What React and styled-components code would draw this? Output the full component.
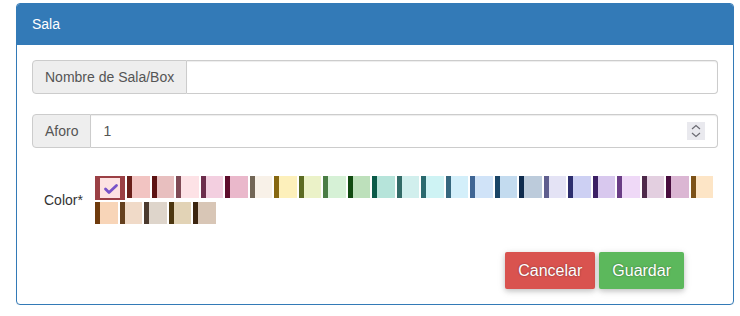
import styled, { createGlobalStyle } from 'styled-components';
import { useState } from 'react';

const GlobalStyle = createGlobalStyle`
  body {
    margin: 0;
    background: #fff;
    font-family: "Liberation Sans", Arial, Helvetica, sans-serif;
    font-size: 14px;
    color: #333;
  }
  * {
    box-sizing: border-box;
  }
`;

// [dark strip, light fill]
const colors = [
  ['#9b4045', '#fde2e2'],
  ['#6a1f1a', '#f2c4c2'],
  ['#5c1212', '#e8bfbf'],
  ['#7f4a55', '#fde2e6'],
  ['#6d2e4d', '#f3cfe0'],
  ['#5e0d2c', '#eab8cb'],
  ['#726656', '#f8f1e8'],
  ['#866710', '#fdf0bb'],
  ['#5b6b22', '#ebf2c8'],
  ['#4a7d45', '#d6f1d6'],
  ['#114a10', '#bde0bb'],
  ['#0a5a48', '#b6e4da'],
  ['#336b67', '#d1efed'],
  ['#2a6a6e', '#cef3f4'],
  ['#36677e', '#d3effa'],
  ['#3f6594', '#d0e3f8'],
  ['#1a4566', '#c3dbef'],
  ['#0f2b4d', '#bccbdb'],
  ['#5f5e8e', '#e4e3f5'],
  ['#2d2e6e', '#cdd0f3'],
  ['#3b1f64', '#d8c8ee'],
  ['#6a3d86', '#efd9f7'],
  ['#4e2a4a', '#e3cfe0'],
  ['#480d3e', '#dbb6d3'],
  ['#7d5218', '#fde5c6'],
  ['#6f3b0d', '#f8d5b8'],
  ['#65401e', '#f0dac8'],
  ['#4b3a2e', '#ded5cb'],
  ['#4d3710', '#e2d3b6'],
  ['#3c2510', '#d8c6b6'],
];

export default function App() {
  const [name, setName] = useState('');
  const [aforo, setAforo] = useState('1');
  const [selected, setSelected] = useState(0);

  return (
    <Page>
      <GlobalStyle />
      <Panel>
        <PanelHeading>Sala</PanelHeading>
        <PanelBody>
          <InputGroup>
            <Addon>Nombre de Sala/Box</Addon>
            <Field>
              <TextInput value={name} onChange={(e) => setName(e.target.value)} />
            </Field>
          </InputGroup>

          <InputGroup $mb='28px'>
            <Addon>Aforo</Addon>
            <Field>
              <TextInput value={aforo} onChange={(e) => setAforo(e.target.value)} />
              <Spinner width='18' height='18' viewBox='0 0 18 18'>
                <rect width='18' height='18' fill='#e9e9ee' />
                <polyline points='5,7 9,3.5 13,7' fill='none' stroke='#6b6b72' strokeWidth='1.2' />
                <polyline points='5,11 9,14.5 13,11' fill='none' stroke='#6b6b72' strokeWidth='1.2' />
              </Spinner>
            </Field>
          </InputGroup>

          <ColorRow>
            <ColorLabel>Color*</ColorLabel>
            <Swatches>
              {colors.map(([dark, light], i) =>
                i === selected ? (
                  <SelectedSwatch key={i} $border={dark} $fill={light} onClick={() => setSelected(i)}>
                    <svg width='20' height='20' viewBox='0 0 20 20'>
                      <polyline
                        points='5.5,11 9,14.5 16.5,7.5'
                        fill='none'
                        stroke='#7852c8'
                        strokeWidth='2.8'
                        strokeLinecap='round'
                        strokeLinejoin='round'
                      />
                    </svg>
                  </SelectedSwatch>
                ) : (
                  <Swatch key={i} $dark={dark} $light={light} onClick={() => setSelected(i)} />
                ),
              )}
            </Swatches>
          </ColorRow>

          <Actions>
            <Button $bg='#d9534f'>Cancelar</Button>
            <Button $bg='#5cb85c'>Guardar</Button>
          </Actions>
        </PanelBody>
      </Panel>
    </Page>
  );
}

const Page = styled.div`
  padding: 3px 6px 0 16px;
`;

const Panel = styled.div`
  width: 718px;
  border: 1px solid #337ab7;
  border-radius: 4px;
  background: #fff;
  box-shadow: 0 1px 1px rgba(0, 0, 0, 0.05);
  overflow: hidden;
`;

const PanelHeading = styled.div`
  background: #337ab7;
  color: #fff;
  padding: 10px 15px;
  line-height: 20px;
  font-size: 14px;
  border-bottom: 1px solid #337ab7;
`;

const PanelBody = styled.div`
  padding: 15px;
`;

const InputGroup = styled.div`
  display: flex;
  height: 34px;
  margin-bottom: ${(props) => props.$mb || '20px'};
`;

const Addon = styled.span`
  display: flex;
  align-items: center;
  padding: 6px 12px;
  background: #eee;
  border: 1px solid #ccc;
  border-radius: 4px 0 0 4px;
  color: #555;
  line-height: 20px;
  white-space: nowrap;
`;

const Field = styled.div`
  flex: 1;
  display: flex;
  align-items: center;
  padding: 6px 12px;
  border: 1px solid #ccc;
  border-left: 0;
  border-radius: 0 4px 4px 0;
  box-shadow: inset 0 1px 1px rgba(0, 0, 0, 0.075);
`;

const TextInput = styled.input`
  flex: 1;
  min-width: 0;
  border: none;
  outline: none;
  padding: 0;
  background: transparent;
  font: inherit;
  color: #555;
  line-height: 20px;
`;

const Spinner = styled.svg`
  display: block;
  flex: none;
`;

const ColorRow = styled.div`
  display: flex;
  align-items: center;
  margin-bottom: 28px;
`;

const ColorLabel = styled.label`
  width: 63px;
  flex: none;
  padding-left: 12px;
  color: #333;
`;

const Swatches = styled.div`
  flex: 1;
  display: flex;
  flex-wrap: wrap;
  align-items: flex-start;
  column-gap: 2px;
  row-gap: 2px;
`;

const Swatch = styled.span`
  width: 22.5px;
  height: 22px;
  background: ${(props) => props.$light};
  border-left: 5px solid ${(props) => props.$dark};
  cursor: pointer;
`;

const SelectedSwatch = styled.span`
  display: flex;
  width: 30px;
  height: 24px;
  background: ${(props) => props.$fill};
  border: solid ${(props) => props.$border};
  border-width: 2px 5px;
  cursor: pointer;
  svg {
    display: block;
  }
`;

const Actions = styled.div`
  display: flex;
  justify-content: flex-end;
  gap: 4px;
  padding-right: 34px;
`;

const Button = styled.button`
  height: 37px;
  padding: 0 13px;
  border: none;
  border-radius: 2px;
  background: ${(props) => props.$bg};
  color: #fff;
  font-family: inherit;
  font-size: 16px;
  text-shadow: 0 0 2px rgba(0, 0, 0, 0.45);
  box-shadow: 0 2px 5px rgba(0, 0, 0, 0.16), 0 2px 8px rgba(0, 0, 0, 0.12);
  cursor: pointer;
`;
